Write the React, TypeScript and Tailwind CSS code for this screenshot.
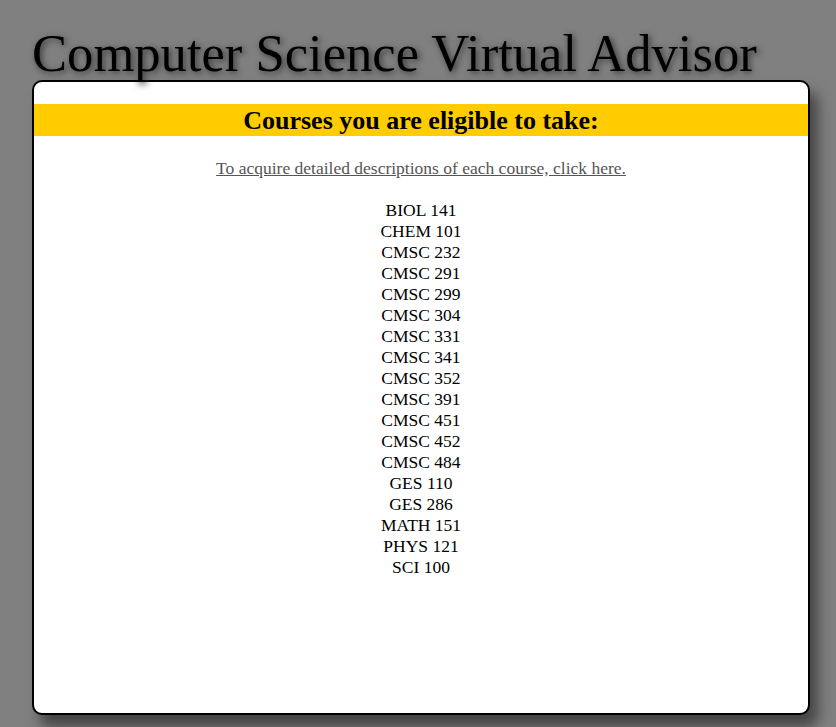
const courses = [
  "BIOL 141",
  "CHEM 101",
  "CMSC 232",
  "CMSC 291",
  "CMSC 299",
  "CMSC 304",
  "CMSC 331",
  "CMSC 341",
  "CMSC 352",
  "CMSC 391",
  "CMSC 451",
  "CMSC 452",
  "CMSC 484",
  "GES 110",
  "GES 286",
  "MATH 151",
  "PHYS 121",
  "SCI 100",
];

export default function App() {
  return (
    <div className="h-[727px] overflow-hidden bg-[#808080] px-8 pt-[27px] font-['Liberation_Serif',serif] text-black">
      <h1 className="text-[52.6px] leading-[53px] [text-shadow:2px_2px_6px_#333]">
        Computer Science Virtual Advisor
      </h1>
      <div className="h-[635px] w-[778px] rounded-[10px] border-2 border-black bg-white pt-[22px] shadow-[8px_12px_14px_#444]">
        <h2 className="bg-[#ffcc00] pt-px text-center text-[26px] font-bold leading-[31px]">
          Courses you are eligible to take:
        </h2>
        <p className="mt-[22px] text-center text-[17.5px] leading-[21px]">
          <a href="#" className="text-[#555] underline">
            To acquire detailed descriptions of each course, click here.
          </a>
        </p>
        <ul className="mt-[21px] text-center text-[17.5px] leading-[21px]">
          {courses.map((c) => (
            <li key={c}>{c}</li>
          ))}
        </ul>
      </div>
    </div>
  );
}
